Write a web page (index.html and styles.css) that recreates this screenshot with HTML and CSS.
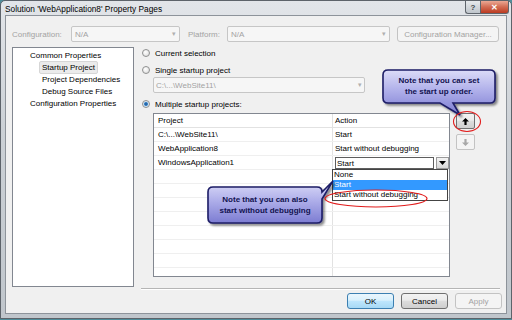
FILE: index.html
```html
<!DOCTYPE html>
<html lang="en">
<head>
    <meta charset="UTF-8">
    <title>Solution 'WebApplication8' Property Pages</title>
    <link rel="stylesheet" href="styles.css">
</head>
<body>
    <div class="window">
        <div class="titlebar">
            <span class="title">Solution 'WebApplication8' Property Pages</span>
            <div class="caption-buttons">
                <span class="cap-btn help">?</span>
                <span class="cap-btn close">&#x2715;</span>
            </div>
        </div>

        <div class="client">
            <div class="config-row">
                <label class="muted lbl-config">Configuration:</label>
                <div class="combo disabled combo-config"><span>N/A</span><span class="arrow">&#x25BE;</span></div>
                <label class="muted lbl-platform">Platform:</label>
                <div class="combo disabled combo-platform"><span>N/A</span><span class="arrow">&#x25BE;</span></div>
                <div class="button disabled config-manager">Configuration Manager...</div>
            </div>

            <div class="main">
                <div class="tree">
                    <div class="node">Common Properties</div>
                    <div class="node child"><span class="node-label selected">Startup Project</span></div>
                    <div class="node child"><span class="node-label">Project Dependencies</span></div>
                    <div class="node child"><span class="node-label">Debug Source Files</span></div>
                    <div class="node">Configuration Properties</div>
                </div>

                <div class="pane">
                    <div class="radio-row first"><span class="radio"></span>Current selection</div>
                    <div class="radio-row"><span class="radio"></span>Single startup project</div>
                    <div class="combo disabled single-project"><span>C:\...\WebSite11\</span><span class="arrow">&#x25BE;</span></div>
                    <div class="radio-row"><span class="radio checked"></span>Multiple startup projects:</div>

                    <div class="projects">
                        <div class="grid">
                            <div class="grid-row header"><div class="cell">Project</div><div class="cell">Action</div></div>
                            <div class="grid-row"><div class="cell">C:\...\WebSite11\</div><div class="cell">Start</div></div>
                            <div class="grid-row"><div class="cell">WebApplication8</div><div class="cell">Start without debugging</div></div>
                            <div class="grid-row">
                                <div class="cell">WindowsApplication1</div>
                                <div class="cell">
                                    <div class="cell-combo">
                                        <span class="cell-combo-text">Start</span>
                                        <span class="cell-combo-btn">
                                            <svg width="7" height="4" viewBox="0 0 7 4"><path d="M0 0 H7 L3.5 4 Z" fill="#000"/></svg>
                                        </span>
                                    </div>
                                </div>
                            </div>
                            <div class="grid-row"><div class="cell"></div><div class="cell"></div></div>
                            <div class="grid-row"><div class="cell"></div><div class="cell"></div></div>
                            <div class="grid-row"><div class="cell"></div><div class="cell"></div></div>
                            <div class="grid-row"><div class="cell"></div><div class="cell"></div></div>
                            <div class="grid-row"><div class="cell"></div><div class="cell"></div></div>
                            <div class="grid-row"><div class="cell"></div><div class="cell"></div></div>
                            <div class="grid-row"><div class="cell"></div><div class="cell"></div></div>
                            <div class="grid-row"><div class="cell"></div><div class="cell"></div></div>
                        </div>
                        <div class="order-buttons">
                            <div class="order-btn">
                                <svg width="7" height="7" viewBox="0 0 7 7"><path d="M3.5 0 L7 3.5 H4.6 V7 H2.4 V3.5 H0 Z" fill="#000"/></svg>
                            </div>
                            <div class="order-btn disabled">
                                <svg width="7" height="7" viewBox="0 0 7 7"><path d="M3.5 7 L7 3.5 H4.6 V0 H2.4 V3.5 H0 Z" fill="#a8a8a8"/></svg>
                            </div>
                        </div>
                    </div>
                </div>
            </div>

            <div class="dialog-buttons">
                <div class="button default">OK</div>
                <div class="button">Cancel</div>
                <div class="button disabled">Apply</div>
            </div>
        </div>
    </div>

    <!-- open dropdown of the WindowsApplication1 action -->
    <div class="dropdown-list">
        <div class="item">None</div>
        <div class="item highlighted">Start</div>
        <div class="item">Start without debugging</div>
    </div>

    <!-- annotations drawn over the screenshot -->
    <svg class="annotations" width="512" height="320" viewBox="0 0 512 320">
        <defs>
            <linearGradient id="calloutFill" x1="0" y1="0" x2="0" y2="1">
                <stop offset="0" stop-color="#dcdcf8"/>
                <stop offset="0.45" stop-color="#b0b0ea"/>
                <stop offset="1" stop-color="#7c7cd2"/>
            </linearGradient>
            <filter id="shadow" x="-10%" y="-10%" width="130%" height="140%">
                <feDropShadow dx="2" dy="2" stdDeviation="1.2" flood-color="#000" flood-opacity="0.45"/>
            </filter>
        </defs>
        <path d="M388 70 H490 Q495 70 495 75 V98 Q495 103 490 103 H453 L460 115 L440 103 H388 Q383 103 383 98 V75 Q383 70 388 70 Z"
              fill="url(#calloutFill)" stroke="#1d1d66" stroke-width="1.6" filter="url(#shadow)"/>
        <path d="M213 187 H317 Q322 187 322 192 L333 181 L322 199 V218 Q322 223 317 223 H213 Q208 223 208 218 V192 Q208 187 213 187 Z"
              fill="url(#calloutFill)" stroke="#1d1d66" stroke-width="1.6" filter="url(#shadow)"/>
        <ellipse cx="467" cy="121.5" rx="13.5" ry="10" fill="none" stroke="#e11b1b" stroke-width="1.1"/>
        <ellipse cx="376" cy="198.5" rx="51" ry="8.5" fill="none" stroke="#e11b1b" stroke-width="1.1"/>
    </svg>

    <div class="callout-text order-note">Note that you can set<br>the start up order.</div>
    <div class="callout-text debug-note">Note that you can also<br>start without debugging</div>
</body>
</html>
```

FILE: styles.css
```css
body {
    margin: 0;
    position: relative;
    width: 512px;
    height: 320px;
    overflow: hidden;
    background-color: #4f8d9a;
    font-family: "Liberation Sans", Arial, sans-serif;
    font-size: 8px;
    color: #000;
}

.window {
    width: 512px;
    height: 319px;
    box-sizing: border-box;
    display: flex;
    flex-direction: column;
    padding: 0 4px 4px 4px;
    background: linear-gradient(to bottom, #e2e5e9, #ccd1d6 40%, #c0c6cc);
    border: 1px solid #5d636a;
    border-radius: 5px 5px 0 0;
}

.titlebar {
    height: 14px;
    display: flex;
    justify-content: space-between;
    align-items: center;
}

.title {
    font-size: 8.3px;
    color: #000;
    padding-top: 1px;
}

.caption-buttons {
    display: flex;
    align-self: flex-start;
    margin-right: -2px;
}

.cap-btn {
    height: 12px;
    display: flex;
    align-items: center;
    justify-content: center;
    border: 1px solid #5f656c;
    border-top: none;
    font-weight: bold;
}

.help {
    width: 14px;
    border-radius: 0 0 0 3px;
    border-right: none;
    background: linear-gradient(to bottom, #e6e9ec, #bfc5cb);
    color: #40464d;
    font-size: 8px;
}

.close {
    width: 27px;
    border-radius: 0 0 3px 0;
    background: linear-gradient(to bottom, #eba894, #d26b52 50%, #bb3b22);
    color: #fff;
    font-size: 8px;
}

.client {
    flex: 1;
    display: flex;
    flex-direction: column;
    padding: 10px 4px 4px 6px;
    background-color: #f0f0f0;
    border: 1px solid #8d939a;
}

.muted {
    color: #a3a3a3;
}

/* configuration row */
.config-row {
    height: 16px;
    display: flex;
    align-items: center;
}

.lbl-config {
    width: 59px;
}

.lbl-platform {
    width: 39px;
    margin-left: 8px;
}

.combo {
    height: 16px;
    box-sizing: border-box;
    display: flex;
    align-items: center;
    justify-content: space-between;
    padding: 0 3px;
    border: 1px solid #c6c6c6;
    border-radius: 2px;
    background-color: #f6f6f6;
}

.combo.disabled {
    color: #a3a3a3;
}

.combo .arrow {
    font-size: 7px;
    color: #b0b0b0;
}

.combo-config {
    width: 109px;
}

.combo-platform {
    width: 163px;
}

.button {
    height: 16px;
    box-sizing: border-box;
    display: flex;
    align-items: center;
    justify-content: center;
    border: 1px solid #707070;
    border-radius: 3px;
    background: linear-gradient(to bottom, #f3f3f3 0%, #ebebeb 45%, #dddddd 50%, #cfcfcf 100%);
}

.button.disabled {
    color: #a3a3a3;
    border-color: #c3c3c3;
    background: #f4f4f4;
}

.config-manager {
    width: 102px;
    margin-left: 7px;
}

/* tree + page */
.main {
    display: flex;
    gap: 7px;
    margin-top: 5px;
    height: 242px;
}

.tree {
    width: 122px;
    height: 240px;
    box-sizing: border-box;
    padding-top: 1px;
    background-color: #fff;
    border: 1px solid #828790;
}

.node {
    height: 12px;
    display: flex;
    align-items: center;
    padding-left: 17px;
    white-space: nowrap;
}

.node.child {
    padding-left: 26px;
}

.node-label {
    height: 11px;
    display: flex;
    align-items: center;
    padding: 0 2px;
    border: 1px solid transparent;
    border-radius: 2px;
}

.node-label.selected {
    background-color: #ebebeb;
    border-color: #d6d6d6;
}

.pane {
    width: 359px;
    height: 242px;
    box-sizing: border-box;
    border-bottom: 1px solid #b5b5b5;
    box-shadow: 0 1px 0 #fff;
}

.radio-row {
    height: 12px;
    display: flex;
    align-items: center;
    gap: 3px;
    margin-top: 5px;
    padding-left: 1px;
}

.radio-row.first {
    margin-top: 0;
}

.radio {
    width: 8px;
    height: 8px;
    box-sizing: border-box;
    border: 1px solid #8f9090;
    border-radius: 50%;
    background: radial-gradient(circle at 40% 35%, #ffffff, #d8d8d8);
    margin-right: 2px;
}

.radio.checked {
    background: radial-gradient(circle, #1c4f8a 0, #3f86c8 1.6px, #d8e6f2 2.4px, #eef2f6 100%);
}

.single-project {
    width: 212px;
    margin: 1px 0 0 12px;
    padding: 0 2px;
}

/* startup projects grid */
.projects {
    display: flex;
    gap: 6px;
    margin-top: 3px;
}

.grid {
    width: 297px;
    height: 164px;
    box-sizing: border-box;
    margin-left: 12px;
    overflow: hidden;
    background-color: #fff;
    border: 1px solid #828790;
}

.grid-row {
    height: 14px;
    box-sizing: border-box;
    display: flex;
    border-bottom: 1px solid #efefef;
}

.grid-row.header {
    border-bottom-color: #e2e2e2;
}

.cell {
    display: flex;
    align-items: center;
    padding-left: 3px;
}

.cell:first-child {
    width: 179px;
    box-sizing: border-box;
    padding-left: 4px;
    border-right: 1px solid #e2e2e2;
}

.cell:last-child {
    flex: 1;
    padding-left: 2px;
}

.cell-combo {
    width: 114px;
    height: 12px;
    display: flex;
    gap: 2px;
    margin-top: 1px;
}

.cell-combo-text {
    flex: 1;
    display: flex;
    align-items: center;
    padding-left: 1px;
    border: 1px solid #5e5e5e;
    background-color: #fff;
}

.cell-combo-btn {
    width: 11px;
    display: flex;
    align-items: center;
    justify-content: center;
    border: 1px solid #9a9a9a;
    background: linear-gradient(to bottom, #f4f4f4, #d9d9d9);
}

.order-buttons {
    display: flex;
    flex-direction: column;
    gap: 5px;
}

.order-btn {
    width: 19px;
    height: 16px;
    box-sizing: border-box;
    display: flex;
    align-items: center;
    justify-content: center;
    border: 1px solid #707070;
    border-radius: 2px;
    background: linear-gradient(to bottom, #f3f3f3 0%, #ebebeb 45%, #dddddd 50%, #cfcfcf 100%);
}

.order-btn.disabled {
    border-color: #c3c3c3;
    background: #f4f4f4;
}

/* dialog buttons */
.dialog-buttons {
    display: flex;
    justify-content: flex-end;
    gap: 7px;
    margin-top: 4px;
}

.dialog-buttons .button {
    width: 47px;
}

.dialog-buttons .button.default {
    border-color: #3c7fb1;
    background: linear-gradient(to bottom, #eaf6fd 0%, #d9f0fc 45%, #bee6fd 50%, #a7d9f5 100%);
}

/* overlays */
.dropdown-list {
    position: absolute;
    left: 332px;
    top: 169px;
    width: 116px;
    border: 1px solid #444;
    background-color: #fff;
    box-sizing: border-box;
}

.dropdown-list .item {
    height: 10px;
    line-height: 10px;
    padding-left: 1px;
}

.dropdown-list .item.highlighted {
    background-color: #3399ff;
    color: #fff;
}

.annotations {
    position: absolute;
    left: 0;
    top: 0;
}

.callout-text {
    position: absolute;
    text-align: center;
    font-weight: bold;
    font-size: 8px;
    line-height: 11px;
    color: #121250;
}

.order-note {
    left: 383px;
    top: 75px;
    width: 112px;
}

.debug-note {
    left: 208px;
    top: 194px;
    width: 114px;
}
```
